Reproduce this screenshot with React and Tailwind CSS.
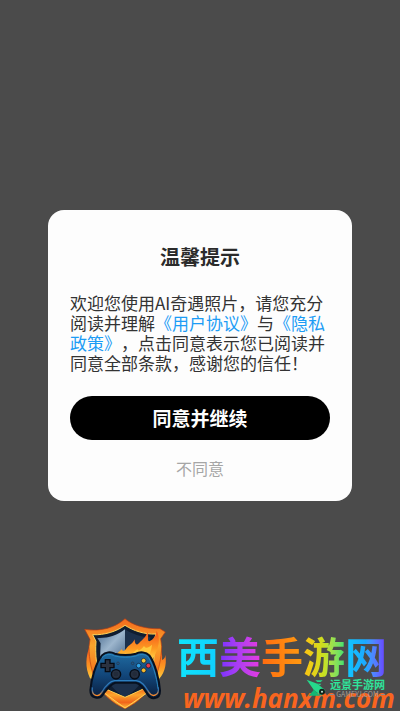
function ShieldLogo() {
  return (
    <svg viewBox="0 0 291 303" className="h-[101px] w-[97px] shrink-0" role="img" aria-label="西美手游网">
      <defs>
        <linearGradient id="rim" x1="0" y1="0" x2="0" y2="1">
          <stop offset="0" stopColor="#f26a1c" />
          <stop offset="0.3" stopColor="#fba52c" />
          <stop offset="0.7" stopColor="#f0641a" />
          <stop offset="1" stopColor="#ffb938" />
        </linearGradient>
        <linearGradient id="steel" x1="0" y1="0" x2="1" y2="1">
          <stop offset="0" stopColor="#46688c" />
          <stop offset="0.5" stopColor="#9db6cd" />
          <stop offset="1" stopColor="#4a6a8c" />
        </linearGradient>
        <linearGradient id="pad" x1="0" y1="0" x2="0" y2="1">
          <stop offset="0" stopColor="#1f6ca2" />
          <stop offset="0.5" stopColor="#12467a" />
          <stop offset="1" stopColor="#0a1d3c" />
        </linearGradient>
        <linearGradient id="flame" x1="0" y1="0" x2="0" y2="1">
          <stop offset="0" stopColor="#f4511c" />
          <stop offset="0.6" stopColor="#fd9a22" />
          <stop offset="1" stopColor="#ffd84a" />
        </linearGradient>
        <linearGradient id="grip" x1="0" y1="0" x2="0" y2="1">
          <stop offset="0" stopColor="#2d7fc0" />
          <stop offset="0.6" stopColor="#2d6fae" />
          <stop offset="1" stopColor="#ff8a24" />
        </linearGradient>
      </defs>
      <path d="M28 110C18 140 14 170 30 205L60 215V110ZM236 110C244 122 248 134 246 150C254 146 256 140 256 134C262 168 250 196 232 212L210 200Z" fill="url(#flame)" />
      <path d="M135 26C155 44 196 58 240 56L256 66L242 86L245 110C242 180 220 256 135 296C54 260 28 190 27 110L30 88L14 58C62 66 108 52 135 26Z" fill="url(#rim)" stroke="#b93c12" strokeWidth="2" />
      <path d="M135 46C160 62 194 74 228 72L222 92C228 180 206 244 135 278C66 246 42 180 48 94L38 74C74 76 110 64 135 46Z" fill="#101d30" stroke="#ffd45a" strokeWidth="3" />
      <path d="M135 58C156 72 184 82 212 82L206 98C214 170 194 226 135 262C78 230 56 170 62 100L52 84C82 86 112 76 135 58Z" fill="#1c304b" />
      <path d="M135 58V150H60L62 100L52 84C82 86 112 76 135 58Z" fill="url(#steel)" />
      <path d="M84 240L135 262L188 238L205 246L135 294L66 244Z" fill="url(#rim)" stroke="#ffd052" strokeWidth="3" />
      <path d="M106 140C112 126 120 124 126 116C126 124 132 126 140 114C148 104 158 102 164 88C164 104 170 108 178 98C190 86 196 84 202 66C208 80 200 92 208 94C220 88 228 78 230 62C242 86 236 110 226 132L216 152Z" fill="url(#flame)" />
      <path d="M140 142C154 136 162 124 172 118C176 126 184 118 192 108C198 118 206 112 216 104C214 124 206 134 206 146Z" fill="#ffc83d" />
      <path d="M66 136C76 126 92 124 104 131C126 136 146 136 168 131C180 124 198 126 208 136C226 160 238 212 240 242C240 270 212 270 202 252C192 236 184 222 168 218H106C90 222 82 236 70 252C60 270 30 266 31 240C34 210 46 160 66 136Z" fill="url(#pad)" stroke="#07101f" strokeWidth="6" />
      <path d="M66 143C78 131 92 131 104 138C126 143 146 143 168 138C182 131 196 132 205 142C218 162 230 200 234 236" fill="none" stroke="#2b86bd" strokeWidth="3" />
      <path d="M37 232C34 258 54 264 65 247C76 228 88 214 104 212H168C188 214 196 230 207 247C218 264 238 256 235 232" fill="none" stroke="url(#grip)" strokeWidth="4" />
      <path d="M76 149H90V160H102V173H90V185H76V173H63V160H76Z" fill="#2b3240" stroke="#060b14" strokeWidth="4" />
      <g stroke="#060b14" strokeWidth="4">
        <circle cx="108" cy="193" r="14" fill="#222b3a" />
        <circle cx="164" cy="193" r="14" fill="#222b3a" />
      </g>
      <g fill="none" stroke="#2c3748" strokeWidth="2">
        <circle cx="108" cy="192" r="9" />
        <circle cx="164" cy="192" r="9" />
        <circle cx="114" cy="160" r="4" />
        <circle cx="158" cy="160" r="4" />
      </g>
      <g stroke="#0a1426" strokeWidth="2">
        <circle cx="191" cy="152" r="7" fill="#f5c93c" />
        <circle cx="176" cy="167" r="7" fill="#2fa3e6" />
        <circle cx="205" cy="167" r="7" fill="#e83a4a" />
        <circle cx="191" cy="181" r="7" fill="#f5b92f" />
      </g>
    </svg>
  );
}

function PartnerMark() {
  return (
    <div className="absolute right-[15px] bottom-[13px] flex items-center gap-1">
      <svg viewBox="0 0 60 54" className="h-[18px] w-5" aria-hidden="true">
        <path d="M2 2L34 14L58 34L46 50L24 34Z" fill="#25d98b" />
        <path d="M28 4H50L44 9H34ZM32 14H46L42 19Z" fill="#25d98b" />
        <path d="M8 50L24 32L42 50Z" fill="#14b874" />
        <circle cx="48" cy="38" r="9" fill="#10241c" />
        <circle cx="48" cy="38" r="3" fill="#c6e8d8" />
      </svg>
      <div className="flex flex-col">
        <span className="text-[11px] leading-3 font-bold text-[#2fe39a]">远景手游网</span>
        <span className="flex items-center justify-between text-[7px] leading-2 text-[#a39c98]">
          <span className="h-px w-1 bg-[#8c8c8c]" />
          GAMEYJ.COM
          <span className="h-px w-1 bg-[#8c8c8c]" />
        </span>
      </div>
    </div>
  );
}

export default function App() {
  return (
    <main className="relative flex min-h-screen items-center justify-center bg-[#4b4b4b] px-12 font-['Noto_Sans_CJK_SC',sans-serif]">
      <section
        role="dialog"
        aria-labelledby="notice-title"
        className="flex w-full max-w-sm flex-col items-center rounded-2xl bg-[#fdfdfd] px-[22px] pt-8 pb-[21px]"
      >
        <h1 id="notice-title" className="text-xl leading-[30px] font-bold text-[#2b2b2b]">
          温馨提示
        </h1>
        <p className="mt-[21px] w-full text-[17px] leading-5 text-[#333333] [text-spacing-trim:space-all]">
          欢迎您使用AI奇遇照片，请您充分阅读并理解
          <a href="#terms" className="text-[#1c9cf5]">《用户协议》</a>与
          <a href="#privacy" className="text-[#1c9cf5]">《隐私政策》</a>
          ，点击同意表示您已阅读并同意全部条款，感谢您的信任！
        </p>
        <button type="button" className="mt-[23px] h-11 w-full rounded-full bg-black text-[19px] font-bold text-white">
          同意并继续
        </button>
        <button type="button" className="mt-4 text-base leading-6 text-[#a6a6a6]">
          不同意
        </button>
      </section>

      <footer className="absolute inset-x-0 bottom-0 flex items-end justify-end overflow-hidden pr-2">
        <ShieldLogo />
        <div className="flex w-[215px] flex-col">
          <div className="flex text-[42px] leading-[60px] font-bold">
            <span className="bg-linear-to-r from-[#10e4fc] to-[#10d0ff] bg-clip-text text-transparent">西</span>
            <span className="bg-linear-to-r from-[#7a2fff] to-[#e838e0] bg-clip-text text-transparent">美</span>
            <span className="bg-linear-to-r from-[#ff6a10] to-[#ff9a10] bg-clip-text text-transparent">手</span>
            <span className="bg-linear-to-r from-[#ffc010] via-[#c8e020] to-[#30e070] bg-clip-text text-transparent">游</span>
            <span className="bg-linear-to-r from-[#10c8ff] via-[#1ca8ff] to-[#6a30ff] bg-clip-text text-transparent">网</span>
          </div>
          <span className="pl-1.5 text-[26px] leading-[26px] font-bold text-[#f9651f] italic font-['Open_Sans',sans-serif]">
            www.hanxm.com
          </span>
        </div>
        <PartnerMark />
      </footer>
    </main>
  );
}
